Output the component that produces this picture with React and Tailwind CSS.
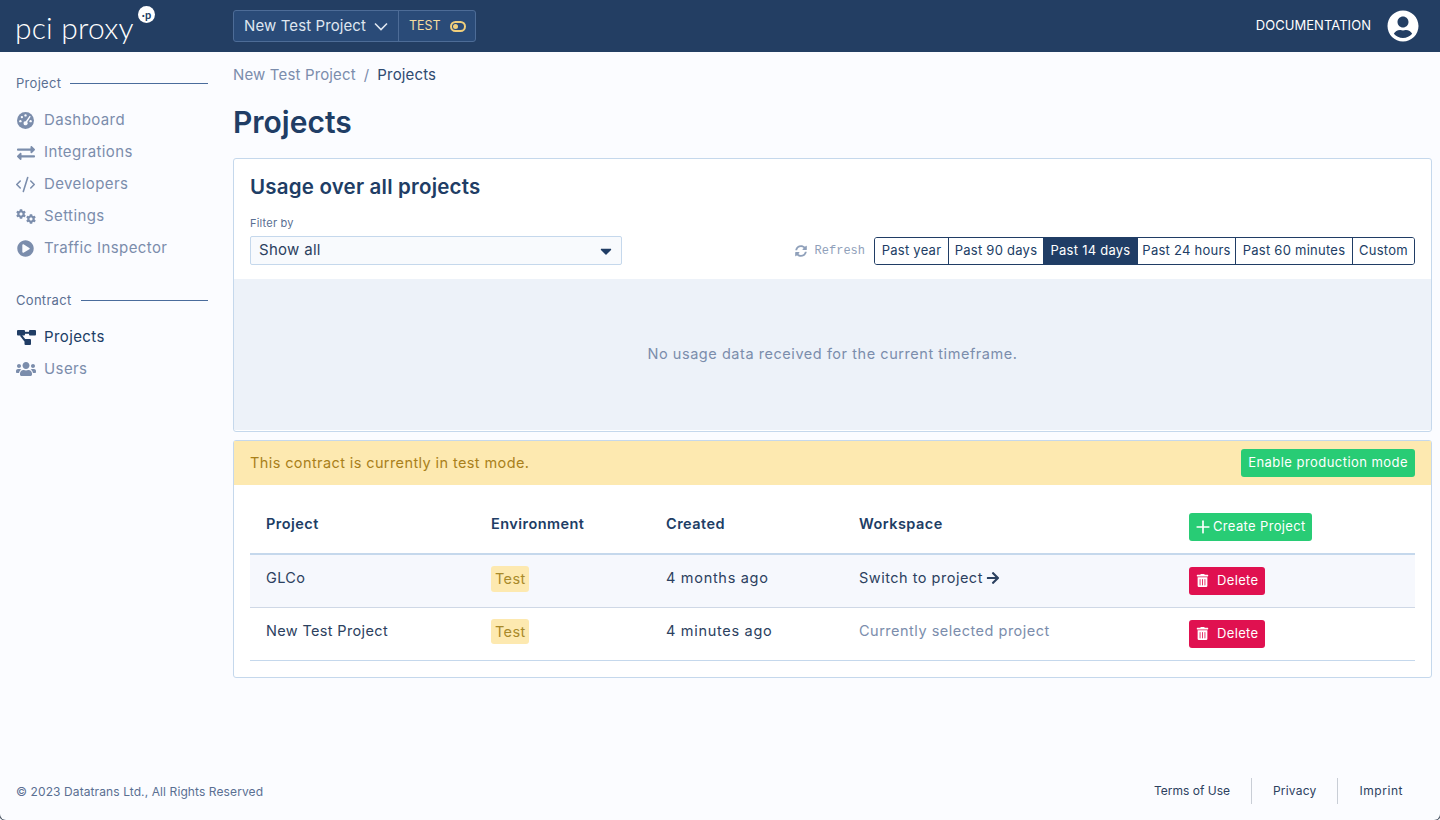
import React from "react";
import { FaExchangeAlt, FaCog, FaPlayCircle, FaUsers, FaTrashAlt, FaSyncAlt, FaArrowRight, FaUserCircle, FaCaretDown } from "react-icons/fa";
import { CodeXml, Plus } from "lucide-react";

function DashIcon() {
  return (
    <svg width="17" height="17" viewBox="0 0 16 16">
      <circle cx="8" cy="8" r="8" fill="currentColor" />
      <g fill="#fbfcff">
        <circle cx="3.2" cy="8.6" r="1.1" />
        <circle cx="4.6" cy="4.8" r="1.1" />
        <circle cx="8" cy="3.2" r="1.1" />
        <circle cx="12.8" cy="8.6" r="1.1" />
        <path d="M11.9 3.6l1 .7-3.3 5.2a1.9 1.9 0 1 1-1.3-.8z" />
      </g>
    </svg>
  );
}

function ProjectsIcon() {
  return (
    <svg width="19" height="16" viewBox="0 0 19 16" fill="currentColor">
      <rect x="0" y="1" width="8" height="5.5" rx="1" />
      <rect x="12" y="1" width="7" height="5.5" rx="1" />
      <rect x="7.5" y="10" width="6.5" height="6" rx="1" />
      <path d="M7 2.8h6v2H7z" />
      <path d="M4.6 5.5l4.4 5.6-1.6 1.3-4.5-5.7z" />
    </svg>
  );
}

function CogsIcon() {
  return (
    <span className="flex h-[18px] w-5 -ml-[1px] items-start justify-between">
      <FaCog size={12} />
      <FaCog size={12} className="mt-[5px]" />
    </span>
  );
}

function NavItem({ icon, label, active }) {
  return (
    <div className={`flex h-8 items-center text-[15px] tracking-[0.4px] ${active ? "text-[#203d65]" : "text-[#7b8dac]"}`}>
      <span className="flex w-7 shrink-0 items-center justify-start pl-[1px]">{icon}</span>
      {label}
    </div>
  );
}

function SideHeading({ children }) {
  return (
    <div className="flex items-center gap-[9px] text-[13px] tracking-[0.3px] text-[#5a6f92]">
      {children}
      <span className="h-px flex-1 bg-[#4a6c9c]" />
    </div>
  );
}

const ranges = [
  { label: "Past year", w: "w-[73px]" },
  { label: "Past 90 days", w: "w-[95px]" },
  { label: "Past 14 days", w: "w-[94px]" },
  { label: "Past 24 hours", w: "w-[98px]" },
  { label: "Past 60 minutes", w: "w-[117px]" },
  { label: "Custom", w: "w-[62px]" },
];

function Row({ name, created, workspace, current, odd }) {
  return (
    <tr className={`h-[53px] border-b text-[14.5px] tracking-[0.35px] text-[#2c4160] ${odd ? "border-[#cfd8e6] bg-[#f6f8fd]" : "border-[#c5d8ec] bg-white"}`}>
      <td className="pb-[6px] pl-4">{name}</td>
      <td className="pb-[4px] pl-4">
        <span className="inline-block rounded-[3px] bg-[#fde9b0] px-[4px] py-[2px] text-[#a9892a]">Test</span>
      </td>
      <td className="pb-[6px] pl-4 tracking-[0.7px]">{created}</td>
      <td className="pb-[6px] pl-4 tracking-[0.5px]">
        {current ? (
          <span className="text-[#7b8dac]">{workspace}</span>
        ) : (
          <span className="inline-flex items-center gap-[3px]">{workspace}<FaArrowRight size={14} /></span>
        )}
      </td>
      <td className="pl-4">
        <button className="flex h-[28px] w-[76px] items-center gap-[8px] rounded-[3px] bg-[#e01150] pl-[7px] text-[13px] tracking-[0.35px] text-white">
          <FaTrashAlt size={13} />
          Delete
        </button>
      </td>
    </tr>
  );
}

export default function App() {
  return (
    <div className="relative flex h-[820px] w-[1440px] flex-col overflow-hidden bg-[#fbfcff] font-['Inter','Noto_Sans',sans-serif] text-[#203d65]">
      <header className="flex h-[52px] shrink-0 items-center bg-[#233e63] pr-[21px]">
        <div className="relative w-[233px] pl-[15px] font-['Lato',sans-serif] text-[30px] leading-none font-light tracking-[0.2px] text-white">
          <span className="relative top-[1px]">pci proxy</span>
          <span className="absolute top-[-5px] left-[138px] flex h-[17px] w-[17px] items-center justify-center rounded-full bg-white text-[11px] font-bold tracking-normal text-[#203d65]">·p</span>
        </div>
        <div className="flex h-8 items-center rounded-[3px] border border-[#4d6c97] bg-[#2a4b78] text-[#dfe6f0]">
          <div className="flex h-full w-[165px] items-center gap-[8px] border-r border-[#4d6c97] pl-[10px] text-[15px] tracking-[0.1px]">
            New Test Project
            <svg width="14" height="9" viewBox="0 0 14 9" fill="none" stroke="currentColor" strokeWidth="1.6"><path d="M1 1.5l6 6 6-6" /></svg>
          </div>
          <div className="flex h-full w-[76px] items-center gap-[9px] pl-[10px] text-[12.5px] text-[#f4dca0]">
            TEST
            <span className="flex h-[11px] w-[16px] items-center rounded-full border-2 border-[#f0cf7c] pl-[1px]"><span className="h-[5px] w-[5px] rounded-full bg-[#f0cf7c]" /></span>
          </div>
        </div>
        <div className="ml-auto flex items-center gap-4 text-[13px] tracking-[0.05px] text-white">
          DOCUMENTATION
          <FaUserCircle size={32} />
        </div>
      </header>

      <div className="flex min-h-0 flex-1">
        <aside className="w-[233px] shrink-0 pt-[22px] pr-[25px] pl-4">
          <SideHeading>Project</SideHeading>
          <div className="mt-[11px] flex flex-col">
            <NavItem icon={<DashIcon />} label="Dashboard" />
            <NavItem icon={<FaExchangeAlt size={18} />} label="Integrations" />
            <NavItem icon={<CodeXml size={21} strokeWidth={1.8} className="-ml-[2px]" />} label="Developers" />
            <NavItem icon={<CogsIcon />} label="Settings" />
            <NavItem icon={<FaPlayCircle size={17} />} label="Traffic Inspector" />
          </div>
          <div className="mt-[26px]">
            <SideHeading>Contract</SideHeading>
          </div>
          <div className="mt-[11px] flex flex-col">
            <NavItem icon={<ProjectsIcon />} label="Projects" active />
            <NavItem icon={<FaUsers size={20} className="-ml-[1px]" />} label="Users" />
          </div>
        </aside>

        <main className="flex min-w-0 flex-1 flex-col pr-2">
          <nav className="mt-[13px] flex h-5 items-center gap-2 text-[15px] tracking-[0.15px] text-[#7b8dac]">
            New Test Project <span>/</span> <span className="text-[#2f4a70]">Projects</span>
          </nav>
          <h1 className="mt-[19px] text-[30px] leading-[36px] font-semibold text-[#203d65]">Projects</h1>

          <section className="mt-[18px] h-[274px] rounded-[3px] border border-[#c5d8ec] bg-white">
            <h2 className="mt-[15px] ml-4 text-[20.5px] leading-[26px] font-semibold tracking-[0.2px] text-[#203d65]">Usage over all projects</h2>
            <div className="mt-[16px] ml-4 text-[11px] leading-[14px] tracking-[0.2px] text-[#5a6f92]">Filter by</div>
            <div className="mt-[6px] flex h-[29px] items-center px-4">
              <div className="flex h-[29px] w-[372px] items-center justify-between rounded-[2px] border border-[#c5d8ec] bg-[#f8fafd] pr-[6px] pl-2 text-[15px] tracking-[0.3px] text-[#2c4160]">
                Show all
                <FaCaretDown size={18} className="text-[#203d65]" />
              </div>
              <div className="ml-auto flex items-center">
                <span className="mr-[9px] flex items-center gap-2 font-['Liberation_Mono','DejaVu_Sans_Mono',monospace] text-[12px] text-[#8fa0ba]">
                  <FaSyncAlt size={12} />
                  Refresh
                </span>
                <div className="flex h-7 overflow-hidden rounded-[3px] border border-[#203d65] text-[13px] tracking-[0.25px] text-[#203d65]">
                  {ranges.map((r, i) => (
                    <div key={r.label} className={`flex items-center justify-center whitespace-nowrap ${r.w} ${i > 0 ? "border-l border-[#203d65]" : ""} ${i === 2 ? "bg-[#203d65] text-white" : "bg-white"}`}>{r.label}</div>
                  ))}
                </div>
              </div>
            </div>
            <div className="mt-[14px] flex h-[151px] items-center justify-center bg-[#edf2f9] pb-[2px] text-[14.5px] tracking-[0.55px] text-[#7b8dac]">
              No usage data received for the current timeframe.
            </div>
          </section>

          <section className="mt-2 h-[238px] rounded-[3px] border border-[#c5d8ec] bg-white">
            <div className="flex h-[44px] items-center justify-between bg-[#fde9b0] pr-4 pl-4 text-[14.5px] tracking-[0.4px] text-[#a9801a]">
              This contract is currently in test mode.
              <button className="h-[28px] rounded-[3px] bg-[#28cc75] px-[7px] text-[13px] tracking-[0.45px] text-white">Enable production mode</button>
            </div>
            <div className="px-4">
              <table className="w-full table-fixed border-collapse">
                <colgroup>
                  <col className="w-[225px]" />
                  <col className="w-[175px]" />
                  <col className="w-[193px]" />
                  <col className="w-[330px]" />
                  <col />
                </colgroup>
                <thead>
                  <tr className="h-[69px] border-b-2 border-[#c5d8ec] text-left text-[14.5px] tracking-[0.45px] text-[#203d65]">
                    <th className="pt-[10px] pl-4 font-semibold">Project</th>
                    <th className="pt-[10px] pl-4 font-semibold">Environment</th>
                    <th className="pt-[10px] pl-4 font-semibold">Created</th>
                    <th className="pt-[10px] pl-4 font-semibold">Workspace</th>
                    <th className="pt-[16px] pl-4 font-normal">
                      <button className="flex h-[28px] w-[123px] items-center gap-[3px] rounded-[3px] bg-[#28cc75] pl-[7px] text-[13px] tracking-[0.35px] text-white">
                        <Plus size={20} strokeWidth={2} className="-mx-[3px]" />
                        Create Project
                      </button>
                    </th>
                  </tr>
                </thead>
                <tbody>
                  <Row name="GLCo" created="4 months ago" workspace="Switch to project" odd />
                  <Row name="New Test Project" created="4 minutes ago" workspace="Currently selected project" current />
                </tbody>
              </table>
            </div>
          </section>
        </main>
      </div>

      <footer className="flex h-[58px] shrink-0 items-center pr-[15px] pl-4 text-[12px] tracking-[0.1px] text-[#5a6f92]">
        <span className="pt-[2px]">© 2023 Datatrans Ltd., All Rights Reserved</span>
        <div className="ml-auto flex items-center text-[#2c4160]">
          <span className="pr-[21px] tracking-[0px]">Terms of Use</span>
          <span className="border-l border-[#c9ced6] px-[21px] py-1 tracking-[0.2px]">Privacy</span>
          <span className="border-l border-[#c9ced6] py-1 pr-[22px] pl-[21px] tracking-[0.55px]">Imprint</span>
        </div>
      </footer>

      <span className="absolute -bottom-px -left-px h-[10px] w-[7px] rounded-bl-[10px] border-b border-l border-[#56606e]" />
      <span className="absolute -right-px -bottom-px h-[10px] w-[7px] rounded-br-[10px] border-r border-b border-[#56606e]" />
    </div>
  );
}
